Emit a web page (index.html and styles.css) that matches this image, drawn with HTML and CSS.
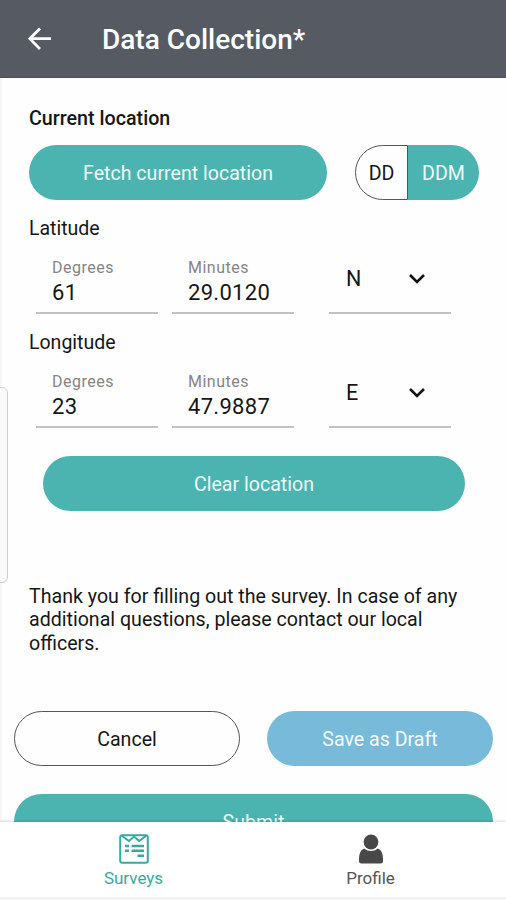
FILE: index.html
```html
<!doctype html>
<html lang="en">
<head>
    <meta charset="UTF-8">
    <meta name="viewport" content="width=device-width, initial-scale=1.0">
    <title>Data Collection</title>
    <link rel="stylesheet" href="styles.css">
</head>
<body>
    <div class="app">
        <header class="header">
            <svg class="back" viewBox="0 0 24 24"><path d="M23 11.7H2M12 1.5L1.8 11.7L12 22"/></svg>
            <h1><span>Data Collection*</span></h1>
        </header>
        <main class="content">
            <section class="location">
                <h2><span>Current location</span></h2>
                <div class="fetch-row">
                    <button class="btn teal fetch"><span>Fetch current location</span></button>
                    <div class="toggle">
                        <button class="dd"><span>DD</span></button>
                        <button class="ddm"><span>DDM</span></button>
                    </div>
                </div>
                <div class="label"><span>Latitude</span></div>
                <div class="fields">
                    <div class="field"><small>Degrees</small><b>61</b></div>
                    <div class="field"><small>Minutes</small><b>29.0120</b></div>
                    <div class="select"><span>N</span><svg viewBox="0 0 18 12"><path d="M2 2L9 9L16 2"/></svg></div>
                </div>
                <div class="label"><span>Longitude</span></div>
                <div class="fields">
                    <div class="field"><small>Degrees</small><b>23</b></div>
                    <div class="field"><small>Minutes</small><b>47.9887</b></div>
                    <div class="select"><span>E</span><svg viewBox="0 0 18 12"><path d="M2 2L9 9L16 2"/></svg></div>
                </div>
                <button class="btn teal clear"><span>Clear location</span></button>
                <p class="thanks">Thank you for filling out the survey. In case of any<br>additional questions, please contact our local<br>officers.</p>
            </section>
            <div class="actions">
                <button class="btn cancel"><span>Cancel</span></button>
                <button class="btn draft"><span>Save as Draft</span></button>
                <button class="btn teal submit"><span>Submit</span></button>
            </div>
        </main>
        <nav class="tabs">
            <a class="tab active">
                <svg viewBox="0 0 30 30">
                    <rect x="1.2" y="1.2" width="27.6" height="27.6" rx="2"/>
                    <path d="M3 2L10 7L15 2.5L20 7L27 2"/>
                    <path class="rows" d="M6 12H10M12.5 12H25M6 16.8H10M12.5 16.8H25M18.5 21.8H25"/>
                </svg>
                <span>Surveys</span>
            </a>
            <a class="tab">
                <svg class="person" viewBox="0 0 30 30">
                    <circle cx="15" cy="8" r="7.4"/>
                    <path d="M8 14.5Q15 19.5 22 14.5Q27 16.5 27 25V27Q27 29.5 24.5 29.5H5.5Q3 29.5 3 27V25Q3 16.5 8 14.5Z"/>
                </svg>
                <span>Profile</span>
            </a>
        </nav>
        <div class="edge-handle"></div>
    </div>
</body>
</html>
```

FILE: styles.css
```css
*{
    margin: 0;
    padding: 0;
    box-sizing: border-box;
}
body{
    font-family: Roboto, "Liberation Sans", sans-serif;
    color: #161616;
}
button{
    font: inherit;
    color: inherit;
    border: none;
    background: none;
}
.app{
    width: 506px;
    height: 900px;
    display: flex;
    flex-direction: column;
    position: relative;
    overflow: hidden;
    background: #fefefe;
}
.header{
    height: 78px;
    flex: none;
    display: flex;
    align-items: center;
    padding: 2px 0 0 28px;
    background: #565a62;
    border-bottom: 1px solid #4b4e55;
    color: #fff;
}
.back{
    width: 24px;
    height: 24px;
    margin-right: 50px;
    margin-bottom: 2px;
    fill: none;
    stroke: #fff;
    stroke-width: 2.8;
}
h1{
    font-size: 28px;
    font-weight: 500;
}
.content{
    height: 744px;
    flex: none;
    overflow: hidden;
    border-left: 2px solid #f6f6f6;
}
.location{
    height: 633px;
    padding: 27px 27px 0 27px;
}
h2{
    height: 40px;
    line-height: 27px;
    font-size: 19.7px;
    font-weight: 500;
}
.fetch-row{
    display: flex;
    justify-content: space-between;
}
.btn{
    height: 55px;
    padding-top: 1px;
    border-radius: 28px;
    font-size: 19.6px;
}
.teal{
    background: #4cb4b0;
    color: #eefcfb;
}
.fetch{
    width: 298px;
}
.toggle{
    width: 124px;
    height: 55px;
    display: flex;
    font-size: 19.6px;
}
.dd{
    width: 53px;
    padding-top: 1px;
    border: 1px solid #555;
    border-radius: 28px 0 0 28px;
}
.ddm{
    flex: 1;
    padding-top: 1px;
    border-radius: 0 28px 28px 0;
    background: #4cb4b0;
    color: #eefcfb;
}
.label{
    margin-top: 17px;
    font-size: 19.5px;
    line-height: 24px;
}
.fields{
    display: grid;
    grid-template-columns: 122px 122px 122px;
    column-gap: 14px;
    padding-left: 7px;
    height: 73px;
}
.field, .select{
    border-bottom: 2px solid #c2c2c2;
}
.field{
    padding: 17px 0 0 16px;
}
.field small{
    display: block;
    font-size: 16px;
    line-height: 20px;
    letter-spacing: .5px;
    color: #858585;
}
.field b{
    display: block;
    font-size: 22px;
    font-weight: 400;
    line-height: 30px;
    letter-spacing: .3px;
}
.select{
    width: 122px;
    margin-left: 21px;
    padding: 4px 25px 0 17px;
    display: flex;
    align-items: center;
    justify-content: space-between;
    font-size: 21.5px;
}
.select svg{
    width: 18px;
    height: 12px;
    fill: none;
    stroke: #111;
    stroke-width: 2.6;
}
.clear{
    display: block;
    width: 422px;
    margin: 28px 0 0 14px;
}
.thanks{
    margin-top: 74px;
    font-size: 19.6px;
    line-height: 23.3px;
    white-space: nowrap;
}
.actions{
    display: grid;
    grid-template-columns: 226px 226px;
    gap: 28px 27px;
    padding-left: 12px;
}
.cancel{
    border: 1px solid #555;
}
.draft{
    background: #78bada;
    color: #f4fbff;
}
.submit{
    grid-column: 1 / 3;
}
.tabs{
    flex: 1;
    display: flex;
    padding: 12px 17px 0 15px;
    border-bottom: 3px solid #f3f3f3;
    background: #fff;
    box-shadow: 0 -1px 2px rgba(0, 0, 0, .15);
    z-index: 1;
}
.tab{
    flex: 1;
    display: flex;
    flex-direction: column;
    align-items: center;
    font-size: 17px;
    line-height: 25px;
    color: #555;
}
.tab svg{
    width: 30px;
    height: 30px;
    margin-bottom: 2px;
    fill: none;
    stroke: #38a8a2;
    stroke-width: 2;
}
.tab .rows{
    stroke-width: 2.4;
}
.tab .person{
    fill: #484848;
    stroke: none;
}
.tab.active{
    color: #38a8a2;
}
/* drawer handle on the left screen edge */
.edge-handle{
    position: absolute;
    left: -6px;
    top: 387px;
    width: 14px;
    height: 196px;
    border: 1px solid #cfcfcf;
    border-radius: 6px;
    background: #fafafa;
}
```
